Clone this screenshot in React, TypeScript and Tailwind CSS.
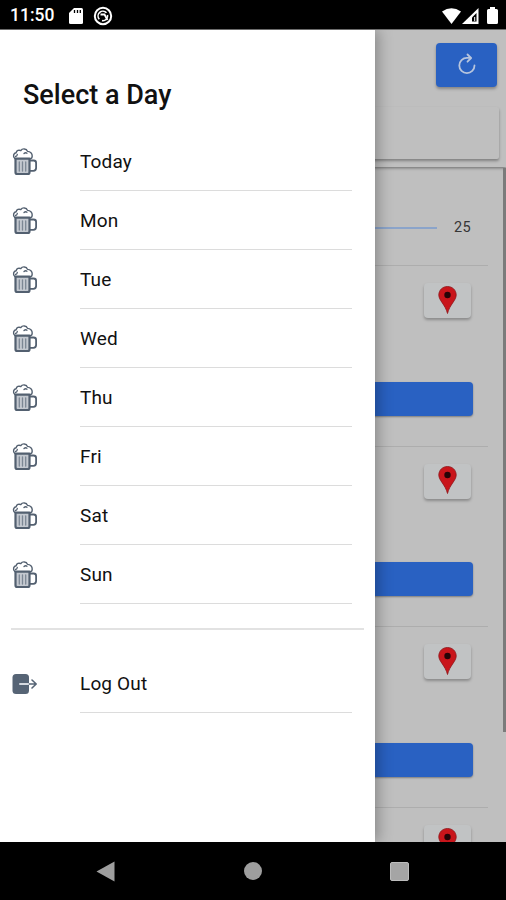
import React from 'react';

const days = ['Today', 'Mon', 'Tue', 'Wed', 'Thu', 'Fri', 'Sat', 'Sun'];
const places = [1, 2, 3, 4];

const StatusBar: React.FC = () => (
  <header className="h-[29px] shrink-0 bg-black text-white flex items-center justify-between pl-2.5 pr-[8px]">
    <div className="flex items-center pt-[2px]">
      <span className="w-[59px] text-[17.500px] leading-none font-medium">11:50</span>
      <svg width="14" height="16" viewBox="0 0 14 16" fill="white">
        <path d="M5 0h7.500Q14 0 14 1.500v13q0 1.500-1.500 1.500h-11Q0 16 0 14.500V5z" />
        <path d="M5.500 2v3M8.500 2v3M11.300 2v3" stroke="black" strokeWidth="1.300" />
      </svg>
      <svg className="ml-[10px]" width="20" height="20" viewBox="0 0 20 20" fill="none" stroke="white">
        <circle cx="10" cy="10" r="8.200" strokeWidth="2" />
        <path d="M6.300 13.200A4.700 4.700 0 0 1 13.500 6.800M14.500 9A4.700 4.700 0 0 1 9 14.600" strokeWidth="1.600" />
        <path d="M7.500 8.500h4l3 5.500" strokeWidth="1.800" />
      </svg>
    </div>
    <div className="flex items-center pt-[2px]">
      <svg width="19" height="16" viewBox="0 0 19 16" fill="white">
        <path d="M0 3.500Q9.500-3 19 3.500L9.500 16z" />
      </svg>
      <svg className="ml-[1px]" width="17" height="16" viewBox="0 0 17 16">
        <path d="M16.500 0v16H0z" fill="white" />
        <path d="M14.500 5v8.500H10V9.500z" fill="black" />
        <path d="M12.700 9v4" stroke="white" strokeWidth="1" />
      </svg>
      <svg className="ml-2" width="11" height="17" viewBox="0 0 11 17" fill="white">
        <path d="M3 0h5v2h1.500Q11 2 11 3.500v12q0 1.500-1.500 1.500h-8Q0 17 0 15.500v-12Q0 2 1.500 2H3z" />
      </svg>
    </div>
  </header>
);

const Beer: React.FC = () => (
  <svg width="28" height="30" viewBox="0 0 28 30" fill="none" stroke="#536070" strokeLinecap="round" strokeLinejoin="round">
    <path
      d="M3.800 11.500C1.500 9.500 2.500 6 5.200 5.700 5.500 3.500 8 2.600 9.800 3.600c1.500-2.400 5.700-2.300 6.700.8 2.800 0 4.800 2.200 4.700 4.600 0 1.500-.8 2.600-1.900 2.800"
      strokeWidth="1.400"
    />
    <path d="M4.500 9.500c1-.2 1.700-1 1.800-2M13 6.500c1-.9 2.200-.9 3-.3" strokeWidth="1.300" />
    <path d="M4.500 11.700h14v13.500q0 1.800-1.800 1.800H6.300q-1.800 0-1.800-1.800z" fill="#c3c8cf" strokeWidth="2.200" />
    <path d="M8.300 15v9M11.500 15v9M14.700 15v9" stroke="#7c8794" strokeWidth="1.300" />
    <path d="M19 13.500h3.700q2.400 0 2.400 2.400v5.200q0 2.700-2.700 2.700H19" strokeWidth="1.800" />
  </svg>
);

const LogOut: React.FC = () => (
  <svg width="28" height="22" viewBox="0 0 28 22" fill="none" strokeLinecap="round" strokeLinejoin="round">
    <rect x="1.500" y="1" width="16.500" height="20" rx="3.500" fill="#566475" />
    <path d="M9 11h9" stroke="#d5dae0" strokeWidth="2" />
    <path d="M18.500 11h6.500M21 7l4.200 4-4.200 4" stroke="#566475" strokeWidth="1.600" />
  </svg>
);

const Refresh: React.FC = () => (
  <svg width="20" height="22" viewBox="0 0 20 22" fill="none" stroke="#b7c5dd" strokeWidth="1.800" strokeLinecap="round" strokeLinejoin="round">
    <path d="M17.500 12.500a7.600 7.600 0 1 1-7.600-7.600h3.500" />
    <path d="M10.500 1.500l3.600 3.500-3.600 3.700" />
  </svg>
);

const Pin: React.FC = () => (
  <svg width="19" height="28" viewBox="0 0 19 28">
    <path
      d="M9.500.5C4.500.5.8 4.200.8 9c0 5.500 6.500 9.500 8.700 18.500C11.700 18.500 18.200 14.500 18.200 9 18.200 4.200 14.500.5 9.500.5z"
      fill="#c9151b"
      stroke="#8e1519"
      strokeWidth=".8"
    />
    <circle cx="9.500" cy="9" r="3.200" fill="#260407" />
  </svg>
);

const PlaceCard: React.FC = () => (
  <section className="h-[180.700px] shrink-0 mr-[15px] border-t border-[#adadad] flex flex-col items-end">
    <div className="mt-[17px] mr-[17px] w-[47px] h-[35px] shrink-0 rounded-[4px] bg-[#c1c3c4] shadow-[0_2px_3px_rgba(0,0,0,0.28)] flex items-center justify-center pb-[2px]">
      <Pin />
    </div>
    <div className="mt-[63.500px] mr-[15px] w-[430px] h-[34px] shrink-0 rounded-[4px] bg-[#2961c2] shadow-[0_1px_2px_rgba(0,0,0,0.35)]" />
  </section>
);

const DayPage: React.FC = () => (
  <div className="h-full flex flex-col bg-[#bfbfbf]">
    <div className="h-[137px] shrink-0 flex flex-col items-end shadow-[0_1px_3px_rgba(0,0,0,0.45)]">
      <button className="mt-[13px] mr-[9px] w-[61px] h-[44px] rounded-[4px] bg-[#2961c2] shadow-[0_2px_3px_rgba(0,0,0,0.3)] flex items-center justify-center pb-[2px]">
        <Refresh />
      </button>
      <div className="mt-[20px] mr-[7px] w-[492px] h-[52px] rounded-[2px] bg-[#bfbfbf] shadow-[0_2px_3px_rgba(0,0,0,0.33)]" />
    </div>
    <div className="flex-1 min-h-0 flex">
      <div className="flex-1 min-w-0 overflow-hidden flex flex-col">
        <div className="h-[98px] shrink-0 flex items-center justify-end pt-[23px] pr-[32px]">
          <div className="flex-1 h-[2px] bg-[#8ba4ca]" />
          <span className="ml-[17px] text-[14.500px] tracking-[0.300px] text-[#363636]">25</span>
        </div>
        {places.map((place) => (
          <PlaceCard key={place} />
        ))}
      </div>
      <div className="mt-[1px] w-[3px] h-[564px] bg-[#7b7b7b]" />
    </div>
  </div>
);

interface MenuItemProps {
  label: string;
  icon: React.ReactNode;
}

const MenuItem: React.FC<MenuItemProps> = ({ label, icon }) => (
  <li className="h-[59.080px] flex pl-[11px] pr-[23px]">
    <div className="w-[69px] shrink-0 flex items-center pt-[1px]">{icon}</div>
    <div className="flex-1 flex items-center pt-[3px] border-b border-[#dcdcdc] text-[19px] tracking-[0.150px] text-[#111]">
      {label}
    </div>
  </li>
);

const DayMenu: React.FC = () => (
  <nav className="absolute left-0 top-0 w-[375px] h-full bg-white shadow-[3px_0_14px_rgba(0,0,0,0.3)]">
    <h1 className="h-[101.500px] pt-[47px] pl-[23px] text-[27px] leading-[36px] font-medium text-[#111]">
      Select a Day
    </h1>
    <ul>
      {days.map((day) => (
        <MenuItem key={day} label={day} icon={<Beer />} />
      ))}
    </ul>
    <div className="mt-[24px] mx-[11px] h-[2px] bg-[#e2e2e2]" />
    <ul className="mt-[24px]">
      <MenuItem label="Log Out" icon={<LogOut />} />
    </ul>
  </nav>
);

const NavBar: React.FC = () => (
  <footer className="h-[58px] shrink-0 bg-black flex items-center justify-between pl-[96px] pr-[97px]">
    <svg width="19" height="21" viewBox="0 0 19 21" fill="#9e9e9e">
      <path d="M18.500.5v20L.5 10.500z" />
    </svg>
    <div className="w-[18px] h-[18px] rounded-full bg-[#9e9e9e]" />
    <div className="w-[19px] h-[19px] rounded-[2px] bg-[#a5a5a5] border border-[#bdbdbd]" />
  </footer>
);

const App: React.FC = () => {
  return (
    <div className="w-[506px] h-[900px] flex flex-col overflow-hidden font-['Roboto',sans-serif]">
      <StatusBar />
      <main className="relative flex-1 min-h-0 overflow-hidden border-t border-[#6b6b6b]">
        <DayPage />
        <DayMenu />
      </main>
      <NavBar />
    </div>
  );
};

export default App;
